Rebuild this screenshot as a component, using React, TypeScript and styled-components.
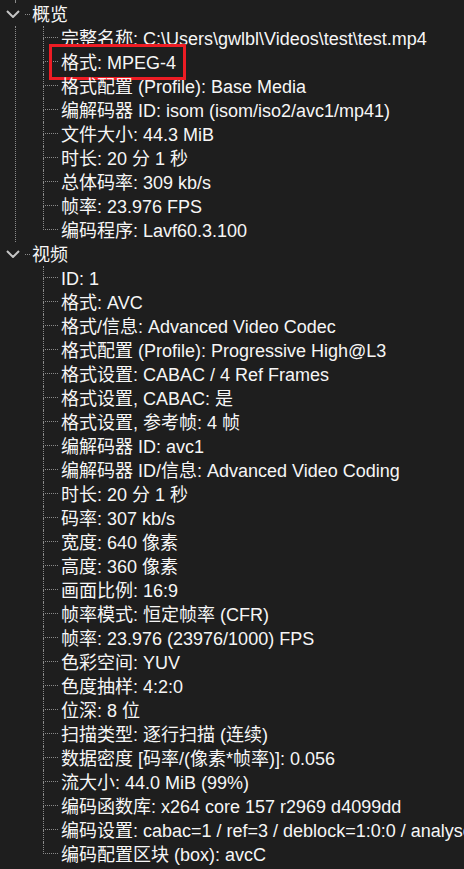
import React from "react";
import styled, { createGlobalStyle } from "styled-components";

const Global = createGlobalStyle`
  html, body {
    margin: 0;
    padding: 0;
    background: #1e1e1e;
    overflow: hidden;
  }
  body {
    font-family: "Liberation Sans", "Noto Sans CJK SC", Arial, sans-serif;
  }
`;

const Tree = styled.div`
  width: 464px;
  height: 869px;
  overflow: hidden;
  background: #1e1e1e;
  color: #f6f6f6;
  font-size: 18px;
  white-space: nowrap;
  box-sizing: border-box;
`;

const TopStub = styled.div`
  margin-left: 15px;
  width: 0;
  height: 2px;
  border-left: 1px dotted #8a8a8a;
`;

const RootItem = styled.div`
  display: flex;
  flex-direction: column;
`;

const RootHeader = styled.div`
  display: flex;
  align-items: center;
  height: 24px;
  padding-left: 6px;
`;

const Chevron = styled.svg`
  width: 14px;
  height: 8px;
  flex: none;
`;

const HConnector = styled.span`
  width: 5px;
  height: 0;
  margin-left: 5px;
  margin-right: 2px;
  border-top: 1px dotted #8a8a8a;
  flex: none;
`;

const Label = styled.span`
  display: block;
  height: 23.5px;
  line-height: 24px;
  padding-top: 0.5px;
`;

const ChildList = styled.div<{ $continues: boolean }>`
  margin-left: 15px;
  border-left: 1px ${(p) => (p.$continues ? "dotted #8a8a8a" : "solid transparent")};
  padding-left: 27px;
  display: flex;
  flex-direction: column;
`;

const ChildRow = styled.div`
  display: flex;
  align-items: flex-start;
  height: 24px;
  position: relative;
`;

const Guide = styled.span`
  display: flex;
  flex-direction: column;
  width: 18px;
  height: 24px;
  flex: none;
`;

const GuideTop = styled.span`
  height: 12px;
  width: 15px;
  border-left: 1px dotted #8a8a8a;
  border-bottom: 1px dotted #8a8a8a;
  box-sizing: border-box;
`;

const GuideBottom = styled.span<{ $last: boolean }>`
  flex: 1;
  border-left: 1px ${(p) => (p.$last ? "solid transparent" : "dotted #8a8a8a")};
`;

const RowText = styled.span`
  display: block;
  height: 23.5px;
  line-height: 24px;
  padding-top: 0.5px;
`;

const Highlight = styled.span`
  position: absolute;
  left: 6px;
  top: -6px;
  width: 137px;
  height: 36px;
  box-sizing: border-box;
  border: 3px solid #ed1c24;
  pointer-events: none;
`;

type Section = { title: string; items: { text: string; marked?: boolean }[] };

const sections: Section[] = [
  {
    title: "概览",
    items: [
      { text: "完整名称: C:\\Users\\gwlbl\\Videos\\test\\test.mp4" },
      { text: "格式: MPEG-4", marked: true },
      { text: "格式配置 (Profile): Base Media" },
      { text: "编解码器 ID: isom (isom/iso2/avc1/mp41)" },
      { text: "文件大小: 44.3 MiB" },
      { text: "时长: 20 分 1 秒" },
      { text: "总体码率: 309 kb/s" },
      { text: "帧率: 23.976 FPS" },
      { text: "编码程序: Lavf60.3.100" },
    ],
  },
  {
    title: "视频",
    items: [
      { text: "ID: 1" },
      { text: "格式: AVC" },
      { text: "格式/信息: Advanced Video Codec" },
      { text: "格式配置 (Profile): Progressive High@L3" },
      { text: "格式设置: CABAC / 4 Ref Frames" },
      { text: "格式设置, CABAC: 是" },
      { text: "格式设置, 参考帧: 4 帧" },
      { text: "编解码器 ID: avc1" },
      { text: "编解码器 ID/信息: Advanced Video Coding" },
      { text: "时长: 20 分 1 秒" },
      { text: "码率: 307 kb/s" },
      { text: "宽度: 640 像素" },
      { text: "高度: 360 像素" },
      { text: "画面比例: 16:9" },
      { text: "帧率模式: 恒定帧率 (CFR)" },
      { text: "帧率: 23.976 (23976/1000) FPS" },
      { text: "色彩空间: YUV" },
      { text: "色度抽样: 4:2:0" },
      { text: "位深: 8 位" },
      { text: "扫描类型: 逐行扫描 (连续)" },
      { text: "数据密度 [码率/(像素*帧率)]: 0.056" },
      { text: "流大小: 44.0 MiB (99%)" },
      { text: "编码函数库: x264 core 157 r2969 d4099dd" },
      { text: "编码设置: cabac=1 / ref=3 / deblock=1:0:0 / analyse=0x3:0x113 / me=hex" },
      { text: "编码配置区块 (box): avcC" },
    ],
  },
];

export default function App() {
  return (
    <>
      <Global />
      <Tree>
        <TopStub />
        {sections.map((s, si) => (
          <RootItem key={s.title}>
            <RootHeader>
              <Chevron viewBox="0 0 14 8">
                <polyline
                  points="1,1 7,7 13,1"
                  fill="none"
                  stroke="#c4c4c4"
                  strokeWidth="2"
                />
              </Chevron>
              <HConnector />
              <Label>{s.title}</Label>
            </RootHeader>
            <ChildList $continues={si < sections.length - 1}>
              {s.items.map((it, i) => (
                <ChildRow key={i}>
                  <Guide>
                    <GuideTop />
                    <GuideBottom $last={i === s.items.length - 1} />
                  </Guide>
                  <RowText>{it.text}</RowText>
                  {it.marked && <Highlight />}
                </ChildRow>
              ))}
            </ChildList>
          </RootItem>
        ))}
      </Tree>
    </>
  );
}
